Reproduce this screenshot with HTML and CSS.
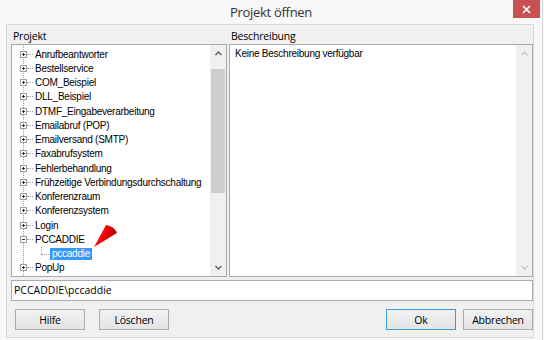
FILE: index.html
```html
<!DOCTYPE HTML>
<html lang=de>
<head>
  <meta charset="UTF-8">
  <title>Projekt öffnen</title>
  <link rel="stylesheet" href="styles.css">
</head>

<body>
  <div class="window">
    <div class="titlebar">
      <span class="title">Projekt öffnen</span>
      <span class="close">
        <svg width="9" height="9" viewBox="0 0 9 9"><path d="M1 1 L8 8 M8 1 L1 8" stroke="#fff" stroke-width="1.7"/></svg>
      </span>
    </div>

    <div class="client">
      <div class="panes">
        <div class="pane treePane">
          <div class="caption">Projekt</div>
          <div class="listbox">
            <ul class="tree">
              <li class="node"><span class="exp"></span>Anrufbeantworter</li>
              <li class="node"><span class="exp"></span>Bestellservice</li>
              <li class="node"><span class="exp"></span>COM_Beispiel</li>
              <li class="node"><span class="exp"></span>DLL_Beispiel</li>
              <li class="node"><span class="exp"></span>DTMF_Eingabeverarbeitung</li>
              <li class="node"><span class="exp"></span>Emailabruf (POP)</li>
              <li class="node"><span class="exp"></span>Emailversand (SMTP)</li>
              <li class="node"><span class="exp"></span>Faxabrufsystem</li>
              <li class="node"><span class="exp"></span>Fehlerbehandlung</li>
              <li class="node"><span class="exp"></span>Frühzeitige Verbindungsdurchschaltung</li>
              <li class="node"><span class="exp"></span>Konferenzraum</li>
              <li class="node"><span class="exp"></span>Konferenzsystem</li>
              <li class="node"><span class="exp"></span>Login</li>
              <li class="node"><span class="exp open"></span>PCCADDIE</li>
              <li class="node child"><span class="stub"></span><span class="sel">pccaddie</span></li>
              <li class="node"><span class="exp"></span>PopUp</li>
            </ul>
            <div class="vscroll">
              <div class="arrow"><svg width="7" height="5" viewBox="0 0 7 5"><path d="M0.5 4 L3.5 1 L6.5 4" fill="none" stroke="#606060" stroke-width="1.4"/></svg></div>
              <div class="track"><div class="thumb"></div></div>
              <div class="arrow"><svg width="7" height="5" viewBox="0 0 7 5"><path d="M0.5 1 L3.5 4 L6.5 1" fill="none" stroke="#606060" stroke-width="1.4"/></svg></div>
            </div>
            <!-- roter Pfeil auf den markierten Eintrag -->
            <svg class="pointer" width="28" height="28" viewBox="0 0 28 28">
              <defs>
                <linearGradient id="red" x1="0" y1="0" x2="1" y2="0.3">
                  <stop offset="0" stop-color="#ff4040"/>
                  <stop offset="0.55" stop-color="#f00000"/>
                  <stop offset="1" stop-color="#b80000"/>
                </linearGradient>
              </defs>
              <path d="M2 25 L14 3 Q22 4 25 11 Z" fill="url(#red)"/>
            </svg>
          </div>
        </div>

        <div class="pane descPane">
          <div class="caption">Beschreibung</div>
          <div class="listbox">
            <div class="desc">Keine Beschreibung verfügbar</div>
            <div class="vscroll off">
              <div class="arrow"><svg width="7" height="5" viewBox="0 0 7 5"><path d="M0.5 4 L3.5 1 L6.5 4" fill="none" stroke="#c4c4c4" stroke-width="1.4"/></svg></div>
              <div class="track"></div>
              <div class="arrow"><svg width="7" height="5" viewBox="0 0 7 5"><path d="M0.5 1 L3.5 4 L6.5 1" fill="none" stroke="#c4c4c4" stroke-width="1.4"/></svg></div>
            </div>
          </div>
        </div>
      </div>

      <div class="path">PCCADDIE\pccaddie</div>

      <div class="buttons">
        <button class="btn first">Hilfe</button>
        <button class="btn wide">Löschen</button>
        <span class="spacer"></span>
        <button class="btn default">Ok</button>
        <button class="btn near">Abbrechen</button>
      </div>
    </div>
  </div>
</body>
</html>
```

FILE: styles.css
```css
body {
  margin: 0;
  background: #f7f7f7;
  font-family: "Open Sans", sans-serif;
}

.window {
  width: 542px;
  height: 340px;
  border-right: 1px solid #d8d8d8;
  display: flex;
  flex-direction: column;
}

.titlebar {
  height: 24px;
  display: grid;
  grid-template-columns: 1fr auto 1fr;
  align-items: start;
}

.title {
  grid-column: 2;
  font-size: 13px;
  letter-spacing: -0.3px;
  line-height: 24px;
  color: #333;
}

.close {
  grid-column: 3;
  justify-self: end;
  margin-right: 2px;
  width: 27px;
  height: 18px;
  background: #c75050;
  display: flex;
  align-items: center;
  justify-content: center;
}

.client {
  margin-left: 6px;
  width: 528px;
  height: 314px;
  box-sizing: border-box;
  border: 1px solid #d9d9d9;
  background: #f0f0f0;
  padding: 4px 0 0 4px;
}

.panes {
  display: flex;
  gap: 2px;
}

.pane {
  display: flex;
  flex-direction: column;
}

.treePane { width: 216px; }
.descPane { width: 304px; }

.caption {
  height: 15px;
  line-height: 15px;
  padding-left: 2px;
  font-size: 10.5px;
  letter-spacing: -0.2px;
  color: #000;
}

.listbox {
  height: 233px;
  box-sizing: border-box;
  border: 1px solid #a9a9a9;
  background: #fff;
  display: flex;
  position: relative;
  overflow: hidden;
}

/* Baum */
.tree {
  flex: 1;
  margin: 0;
  padding: 2px 0 0 0;
  list-style: none;
  background-image: linear-gradient(#a0a0a0 50%, transparent 50%);
  background-size: 1px 2px;
  background-position: 11px 0;
  background-repeat: repeat-y;
}

.node {
  height: 14.25px;
  display: flex;
  align-items: center;
  padding-left: 8px;
  font-family: "Liberation Sans", Arial, sans-serif;
  font-size: 10px;
  letter-spacing: -0.25px;
  color: #000;
  white-space: nowrap;
}

.exp {
  flex: none;
  position: relative;
  width: 7px;
  height: 7px;
  box-sizing: border-box;
  border: 1px solid #9c9c9c;
  margin-right: 8px;
  background:
    linear-gradient(#333, #333) center / 3px 1px no-repeat,
    linear-gradient(#333, #333) center / 1px 3px no-repeat,
    #fff;
}

.exp.open {
  background:
    linear-gradient(#333, #333) center / 3px 1px no-repeat,
    #fff;
}

.exp::after {
  content: "";
  position: absolute;
  left: 6px;
  top: 2px;
  width: 6px;
  border-top: 1px dotted #a0a0a0;
}

.stub {
  flex: none;
  align-self: stretch;
  position: relative;
  width: 30px;
}

.stub::before {
  content: "";
  position: absolute;
  left: 21px;
  top: 0;
  height: 50%;
  border-left: 1px dotted #a0a0a0;
}

.stub::after {
  content: "";
  position: absolute;
  left: 21px;
  top: 50%;
  width: 8px;
  border-top: 1px dotted #a0a0a0;
}

.sel {
  background: #3399ff;
  color: #fff;
  padding: 0 2px;
  line-height: 12px;
}

.pointer {
  position: absolute;
  left: 80px;
  top: 177px;
}

/* Scrollbar */
.vscroll {
  flex: none;
  width: 16px;
  background: #f0f0f0;
  display: flex;
  flex-direction: column;
}

.arrow {
  height: 17px;
  display: flex;
  align-items: center;
  justify-content: center;
}

.track {
  flex: 1;
  padding-top: 7px;
}

.thumb {
  height: 124px;
  margin: 0 1px;
  background: #cdcdcd;
}

.desc {
  flex: 1;
  padding: 2px 0 0 5px;
  line-height: 14.25px;
  font-family: "Liberation Sans", Arial, sans-serif;
  font-size: 10px;
  letter-spacing: -0.25px;
}

/* Pfad und Buttons */
.path {
  margin-top: 3px;
  width: 522px;
  height: 21px;
  box-sizing: border-box;
  border: 1px solid #abadb3;
  background: #fff;
  padding-left: 2px;
  font-size: 10.5px;
  line-height: 19px;
  color: #000;
}

.buttons {
  margin-top: 8px;
  width: 522px;
  display: flex;
}

.btn {
  width: 70px;
  height: 21px;
  padding: 0;
  border: 1px solid #adadad;
  background: linear-gradient(#f1f1f1, #e4e4e4);
  font-family: "Open Sans", sans-serif;
  font-size: 10.5px;
  letter-spacing: -0.2px;
  color: #000;
}

.btn.first { margin-left: 4px; }
.btn.wide { margin-left: 14px; }
.btn.near { margin-left: 7px; }
.btn.default { border-color: #3c9ae0; }

.spacer { flex: 1; }
```
